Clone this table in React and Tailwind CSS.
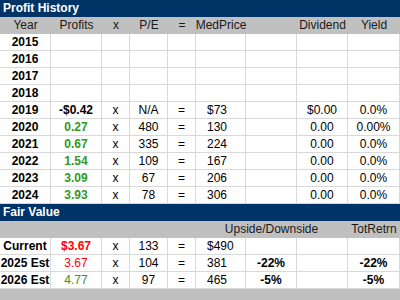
import React from "react";

const COLS = "grid grid-cols-[51px_51px_28px_38px_28px_50px_51px_51px_52px]";
const GREEN = "text-[#2f9a1f]";
const RED = "text-[#ff0000]";

const history = [
  { y: "2015" },
  { y: "2016" },
  { y: "2017" },
  { y: "2018" },
  { y: "2019", p: "-$0.42", pc: "text-black font-bold", pe: "N/A", mp: "$73", d: "$0.00", yl: "0.0%" },
  { y: "2020", p: "0.27", pc: `${GREEN} font-bold`, pe: "480", mp: "130", d: "0.00", yl: "0.00%" },
  { y: "2021", p: "0.67", pc: `${GREEN} font-bold`, pe: "335", mp: "224", d: "0.00", yl: "0.0%" },
  { y: "2022", p: "1.54", pc: `${GREEN} font-bold`, pe: "109", mp: "167", d: "0.00", yl: "0.0%" },
  { y: "2023", p: "3.09", pc: `${GREEN} font-bold`, pe: "67", mp: "206", d: "0.00", yl: "0.0%" },
  { y: "2024", p: "3.93", pc: `${GREEN} font-bold`, pe: "78", mp: "306", d: "0.00", yl: "0.0%" },
];

const fair = [
  { y: "Current", p: "$3.67", pc: `${RED} font-bold`, pe: "133", mp: "$490", up: "", tr: "" },
  { y: "2025 Est", p: "3.67", pc: RED, pe: "104", mp: "381", up: "-22%", tr: "-22%" },
  { y: "2026 Est", p: "4.77", pc: GREEN, pe: "97", mp: "465", up: "-5%", tr: "-5%" },
];

function Cell({ children, className = "" }) {
  return (
    <div
      className={`h-[17px] border-r border-b border-[#d9d9d9] flex items-center justify-center whitespace-nowrap ${className}`}
    >
      {children}
    </div>
  );
}

function HCell({ children, className = "" }) {
  return (
    <div className={`h-[17px] flex items-center justify-center whitespace-nowrap ${className}`}>
      {children}
    </div>
  );
}

export default function App() {
  const has = (r) => r.p !== undefined;
  return (
    <div
      className="w-[400px] h-[300px] overflow-hidden bg-white text-[12px] leading-[17px] text-black"
      style={{ fontFamily: '"Liberation Sans", Arial, sans-serif' }}
    >
      <div className="h-[17px] bg-[#003366] text-white font-bold pl-[3px] flex items-center">
        Profit History
      </div>
      <div className={`${COLS} bg-[#c0c0c0] text-[#1a1a1a]`}>
        <HCell>Year</HCell>
        <HCell>Profits</HCell>
        <HCell>x</HCell>
        <HCell>P/E</HCell>
        <HCell>=</HCell>
        <HCell>MedPrice</HCell>
        <HCell></HCell>
        <HCell>Dividend</HCell>
        <HCell>Yield</HCell>
      </div>
      {history.map((r) => (
        <div key={r.y} className={COLS}>
          <Cell className="font-bold">{r.y}</Cell>
          <Cell className={r.pc || ""}>{r.p}</Cell>
          <Cell>{has(r) ? "x" : ""}</Cell>
          <Cell>{r.pe}</Cell>
          <Cell>{has(r) ? "=" : ""}</Cell>
          <Cell className="justify-start pl-[11px]">{r.mp}</Cell>
          <Cell></Cell>
          <Cell>{r.d}</Cell>
          <Cell>{r.yl}</Cell>
        </div>
      ))}
      <div className="h-[17px] bg-[#003366] text-white font-bold pl-[3px] flex items-center">
        Fair Value
      </div>
      <div className={`${COLS} bg-[#c0c0c0] text-[#1a1a1a]`}>
        <HCell></HCell>
        <HCell></HCell>
        <HCell></HCell>
        <HCell></HCell>
        <HCell></HCell>
        <HCell></HCell>
        <HCell>Upside/Downside</HCell>
        <HCell></HCell>
        <HCell>TotRetrn</HCell>
      </div>
      {fair.map((r) => (
        <div key={r.y} className={COLS}>
          <Cell className="font-bold">{r.y}</Cell>
          <Cell className={r.pc}>{r.p}</Cell>
          <Cell>x</Cell>
          <Cell>{r.pe}</Cell>
          <Cell>=</Cell>
          <Cell className="justify-start pl-[11px]">{r.mp}</Cell>
          <Cell className="font-bold">{r.up}</Cell>
          <Cell></Cell>
          <Cell className="font-bold">{r.tr}</Cell>
        </div>
      ))}
      <div className="h-[11px] bg-[#c0c0c0]"></div>
    </div>
  );
}
